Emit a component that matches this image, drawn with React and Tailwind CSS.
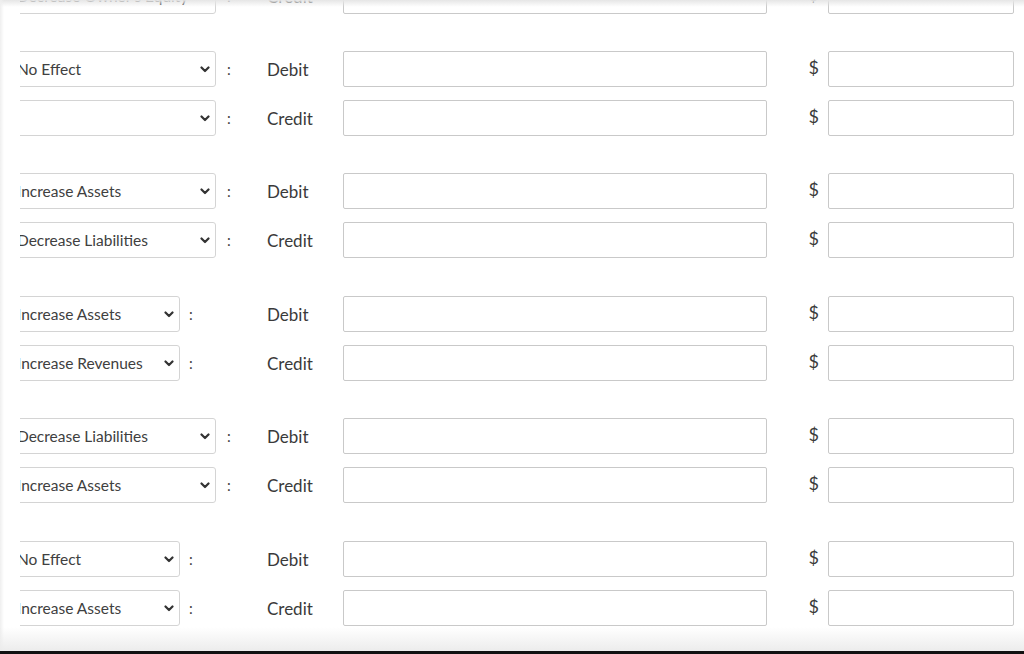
import React from 'react'

const groups = [
  { top: -71, narrow: false, rows: ['', "Decrease Owner's Equity"] },
  { top: 37, narrow: false, rows: ['No Effect', ''] },
  { top: 37, narrow: false, rows: ['Increase Assets', 'Decrease Liabilities'] },
  { top: 38, narrow: true, rows: ['Increase Assets', 'Increase Revenues'] },
  { top: 37, narrow: false, rows: ['Decrease Liabilities', 'Increase Assets'] },
  { top: 38, narrow: true, rows: ['No Effect', 'Increase Assets'] },
]

const labels = ['Debit', 'Credit']

function Chevron() {
  return (
    <svg width="10" height="7" viewBox="0 0 10 7" className="shrink-0">
      <polyline points="1.5,1.5 5,5 8.5,1.5" fill="none" stroke="#333" strokeWidth="2.2" strokeLinecap="round" strokeLinejoin="round" />
    </svg>
  )
}

// fake select, left edge is clipped by the wrapper
function Select({ value, narrow }) {
  return (
    <div className={`${narrow ? 'w-[160px]' : 'w-[196px]'} h-[36px] overflow-hidden`}>
      <div className={`${narrow ? 'w-[174px]' : 'w-[210px]'} -ml-[14px] h-full flex items-center justify-between pl-[10px] pr-[5px] border border-[#d4d4d4] rounded-[3px] bg-white`}>
        <span className="pt-[2px] text-[15.5px] text-[#404040] whitespace-nowrap">{value}</span>
        <Chevron />
      </div>
    </div>
  )
}

function Row({ value, label, narrow }) {
  return (
    <div className="flex items-center h-[36px]">
      <div className="w-[247px] flex items-center">
        <Select value={value} narrow={narrow} />
        <span className={`${narrow ? 'ml-[9px]' : 'ml-[11px]'} text-[15px] text-[#444] leading-none`}>:</span>
      </div>
      <div className="w-[76px] pt-[1px] text-[17px] text-[#3a3a3a]">{label}</div>
      <div className="w-[424px] h-[36px] border border-[#c9c9c9] rounded-[2px] bg-white" />
      <div className="w-[61px] flex justify-end pr-[9px] text-[18px] text-[#3a3a3a] -mt-[4px]">$</div>
      <div className="w-[186px] h-[36px] border border-[#c9c9c9] rounded-[2px] bg-white" />
    </div>
  )
}

export default function App() {
  return (
    <div className="relative w-[1024px] h-[654px] overflow-hidden bg-white" style={{ fontFamily: 'Lato, "Noto Sans", sans-serif' }}>
      <div className="pl-[20px] flex flex-col">
        {groups.map((g, i) => (
          <div key={i} className="flex flex-col gap-[13px]" style={{ marginTop: g.top }}>
            {g.rows.map((v, j) => (
              <Row key={j} value={v} label={labels[j]} narrow={g.narrow} />
            ))}
          </div>
        ))}
      </div>

      {/* top shadow */}
      <div className="absolute top-0 left-0 right-0 h-[7px] bg-gradient-to-b from-[#e6e6e6] to-transparent" />
      {/* left edge */}
      <div className="absolute top-0 bottom-0 left-0 w-[4px] bg-gradient-to-r from-[#efefef] to-transparent" />
      {/* bottom fade + dark edge */}
      <div className="absolute left-0 right-0 bottom-[3px] h-[24px] bg-gradient-to-b from-transparent to-[#ececec]" />
      <div className="absolute left-0 right-0 bottom-0 h-[3px] bg-[#111]" />
    </div>
  )
}
